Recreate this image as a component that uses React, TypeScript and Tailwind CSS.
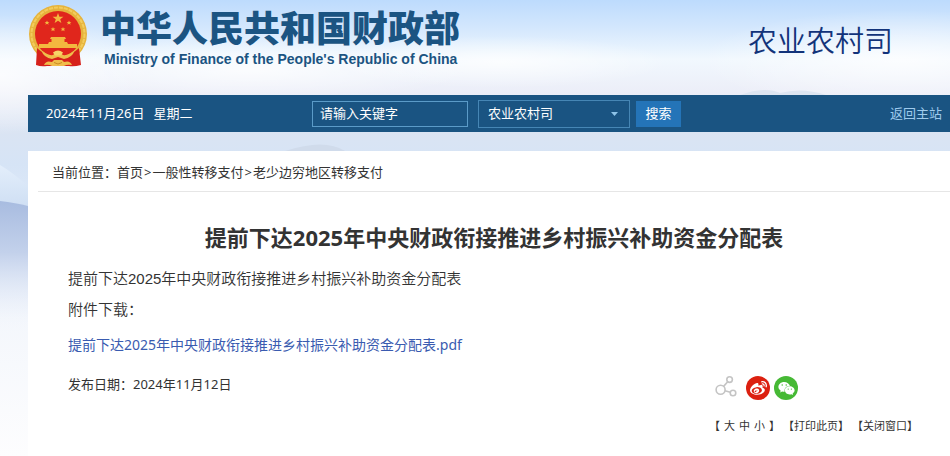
import React, { useState } from 'react';
import { FaWeibo, FaWeixin } from 'react-icons/fa';

const docTitle = '提前下达2025年中央财政衔接推进乡村振兴补助资金分配表';

const departments = ['农业农村司', '预算司', '税政司', '社会保障司'];

const crumbs = ['首页', '一般性转移支付', '老少边穷地区转移支付'];

// 页面背景：天空渐变 + 远山
function Scenery() {
  return (
    <svg
      className="absolute inset-0 -z-10 w-full h-[456px]"
      viewBox="0 0 950 456"
      preserveAspectRatio="none"
      aria-hidden="true"
    >
      <defs>
        <linearGradient id="sky" x1="0" y1="0" x2="0" y2="1">
          <stop offset="0" stopColor="#bddbfd" />
          <stop offset="0.06" stopColor="#d3e7fd" />
          <stop offset="0.13" stopColor="#f1f8fe" />
          <stop offset="0.2" stopColor="#eceef8" />
          <stop offset="0.29" stopColor="#dae4f3" />
          <stop offset="0.36" stopColor="#d6e4f6" />
          <stop offset="0.55" stopColor="#e6eefa" />
          <stop offset="0.7" stopColor="#f4f7fc" />
          <stop offset="1" stopColor="#fdfdfe" />
        </linearGradient>
        <radialGradient id="cloud">
          <stop offset="0" stopColor="#ffffff" stopOpacity="0.75" />
          <stop offset="1" stopColor="#ffffff" stopOpacity="0" />
        </radialGradient>
        <linearGradient id="hill" x1="0" y1="0" x2="0" y2="1">
          <stop offset="0" stopColor="#a8bce0" />
          <stop offset="0.4" stopColor="#c3d1eb" />
          <stop offset="1" stopColor="#f3f6fc" stopOpacity="0" />
        </linearGradient>
        <linearGradient id="ridge" x1="0" y1="0" x2="0" y2="1">
          <stop offset="0" stopColor="#e3eefb" />
          <stop offset="1" stopColor="#cbdcf2" />
        </linearGradient>
      </defs>
      <rect width="950" height="456" fill="url(#sky)" />
      <ellipse cx="0" cy="75" rx="150" ry="60" fill="url(#cloud)" />
      <ellipse cx="250" cy="70" rx="220" ry="32" fill="url(#cloud)" />
      <ellipse cx="500" cy="62" rx="170" ry="26" fill="url(#cloud)" />
      <ellipse cx="900" cy="60" rx="200" ry="50" fill="url(#cloud)" />
      <path d="M740 95 Q765 86 780 93 Q802 87 826 95Z" fill="#dde5f1" />
      <path d="M285 151 Q325 138 345 151Z" fill="#d0dbeb" />
      <path d="M0 165 Q12 172 28 186 V215 H0Z" fill="url(#ridge)" />
      <path d="M0 201 Q16 203 28 206 V330 H0Z" fill="url(#hill)" />
    </svg>
  );
}

function Emblem() {
  return (
    <svg width="60" height="64" viewBox="0 0 60 64" role="img" aria-label="国徽">
      <circle cx="30" cy="29" r="29" fill="#e6b33c" />
      <circle cx="30" cy="29" r="26.5" fill="none" stroke="#f3cc5c" strokeWidth="2" strokeDasharray="4 1" />
      <circle cx="30" cy="29" r="23" fill="#e0261c" />
      <g transform="translate(1 0)">
        <path d="M8 43 Q14 49 23 50 H35 Q44 49 50 43 L52 60 Q45 62 40 61 H18 Q12 62 7 60Z" fill="#d6211b" />
        <g fill="#f3b83f">
          <path d="M29 8l1.4 3.8h4l-3.2 2.4 1.2 3.9-3.4-2.3-3.4 2.3 1.2-3.9-3.2-2.4h4z" />
          <path d="M18 15.500l.7 1.6h1.7l-1.3 1 .5 1.7-1.6-1-1.6 1 .5-1.7-1.3-1h1.7z" />
          <path d="M40 15.500l.7 1.6h1.7l-1.3 1 .5 1.7-1.6-1-1.6 1 .5-1.7-1.3-1h1.7z" />
          <path d="M24 22l.7 1.6h1.7l-1.3 1 .5 1.7-1.6-1-1.6 1 .5-1.7-1.3-1h1.7z" />
          <path d="M34 22l.7 1.6h1.7l-1.3 1 .5 1.7-1.6-1-1.6 1 .5-1.7-1.3-1h1.7z" />
          <path d="M22 32h14l1 2h-1.500v3h2.500l1 2H19l1-2h2.500v-3H21z" />
          <path d="M10 39h38v4H10z" />
        </g>
        <path d="M12 45q7 6 12 5l5-4 5 4q5 1 12-5-3 8-11 9l-6-2-6 2q-8-1-11-9z" fill="#f0bd4b" />
        <path d="M24 47.500q5-4 10 0l-2 3h-6z" fill="#f7d468" />
        <path d="M15 60q2-5 8-3l2-2h8l2 2q6-2 8 3-5-1-8 1H23q-3-2-8-1z" fill="#f0bd4b" />
        <path d="M25 57.500q4 3 8 0" fill="none" stroke="#c98a22" strokeWidth="1" />
      </g>
    </svg>
  );
}

function ShareIcon() {
  return (
    <svg width="22" height="24" viewBox="0 0 22 24" fill="none" stroke="#c4c4c4" strokeWidth="1.6" aria-hidden="true">
      <circle cx="5.6" cy="13.8" r="4.5" />
      <circle cx="14.6" cy="3.6" r="2.8" />
      <circle cx="18" cy="17" r="2.8" />
      <path d="M8.6 10.4 12.7 5.8M10 14.8l5.300 1.400" />
    </svg>
  );
}

export default function App() {
  const [keyword, setKeyword] = useState('');
  const [department, setDepartment] = useState(departments[0]);

  return (
    <div className="relative isolate min-h-screen flex flex-col overflow-x-hidden text-[13px] text-[#333] font-['Noto_Sans','Noto_Sans_CJK_SC',sans-serif]">
      <Scenery />

      <header className="h-[95px] flex items-start pl-7 pr-[57px] pt-[5px]">
        <Emblem />
        <div className="ml-3 text-[#1b5482]">
          <div className="text-[36px] leading-[43px] font-black font-['Noto_Sans_CJK_SC',sans-serif] whitespace-nowrap">中华人民共和国财政部</div>
          <div className="pl-1 text-[14px] leading-[22px] font-bold font-['Liberation_Sans',sans-serif] whitespace-nowrap">
            Ministry of Finance of the People's Republic of China
          </div>
        </div>
        <div className="ml-auto pt-[14px] text-[29px] leading-[40px] font-[350] font-['Noto_Sans_CJK_SC',sans-serif] text-[#12337a] whitespace-nowrap">农业农村司</div>
      </header>

      {/* 搜索栏 */}
      <div className="ml-7 h-[37px] pl-[18px] pr-2 flex items-center bg-[#1a5482] text-white">
        <div className="w-[266px] shrink-0 flex gap-[9px]">
          <span>2024年11月26日</span>
          <span>星期二</span>
        </div>
        <form className="flex items-center" onSubmit={e => e.preventDefault()}>
          <input
            type="text"
            aria-label="关键字"
            placeholder="请输入关键字"
            value={keyword}
            onChange={e => setKeyword(e.target.value)}
            className="w-[156px] h-[26px] px-[7px] pb-[2px] border border-[#5b9bc8] bg-transparent outline-none placeholder:text-white"
          />
          <div className="relative ml-[10px]">
            <select
              aria-label="司局"
              value={department}
              onChange={e => setDepartment(e.target.value)}
              className="block w-[152px] h-7 px-[9px] appearance-none border border-[#4686b5] bg-transparent text-white outline-none"
            >
              {departments.map(d => (
                <option key={d} value={d} className="text-black">{d}</option>
              ))}
            </select>
            <svg className="absolute right-3 top-3 pointer-events-none" width="7" height="4" viewBox="0 0 7 4" aria-hidden="true">
              <path d="M0 0h7L3.5 4z" fill="#8ec3e8" />
            </svg>
          </div>
          <button type="submit" className="ml-[6px] w-[45px] h-[26px] bg-[#2474b8] hover:bg-[#2d82ca]">搜索</button>
        </form>
        <a href="#" className="ml-auto text-[#9fcbed] whitespace-nowrap">返回主站</a>
      </div>

      <main className="ml-7 mt-[19px] pl-[10px] pb-5 grow bg-white">
        <nav aria-label="当前位置" className="h-[41px] px-[14px] flex items-center pt-1 border-b border-[#e6e6e6]">
          <span>当前位置：</span>
          {crumbs.map((c, index) => (
            <React.Fragment key={c}>
              {index > 0 && <span className="px-px">&gt;</span>}
              <a href="#">{c}</a>
            </React.Fragment>
          ))}
        </nav>

        <h1 className="pt-7 text-center text-[22px] leading-[34px] font-bold">{docTitle}</h1>

        <div className="pl-[30px] pt-[10px]">
          <div className="text-[15px] leading-[30px] font-[350]">
            <p className="font-['Liberation_Sans_Narrow','Liberation_Sans','Noto_Sans_CJK_SC',sans-serif]">{docTitle}</p>
            <p>附件下载：</p>
          </div>
          <p className="mt-[6px] text-[14px] leading-[30px]">
            <a href="#" className="text-[#3a5bb0]">{docTitle}.pdf</a>
          </p>

          <div className="mt-3 pr-8 flex items-start justify-between">
            <p className="leading-6">发布日期：2024年11月12日</p>
            <div className="pt-1">
              <div className="pl-[6px] flex items-center">
                <ShareIcon />
                <button type="button" aria-label="分享到微博" className="ml-[9px] size-6 rounded-full bg-[#dc2010] text-white flex items-center justify-center">
                  <FaWeibo size={17} />
                </button>
                <button type="button" aria-label="分享到微信" className="ml-1 size-6 rounded-full bg-[#46b935] text-white flex items-center justify-center">
                  <FaWeixin size={17} />
                </button>
              </div>
              <div className="mt-4 flex gap-[3px] text-[11px] leading-5 whitespace-nowrap">
                <div className="flex gap-1">
                  <span>【</span>
                  <button type="button">大</button>
                  <button type="button">中</button>
                  <button type="button">小</button>
                  <span>】</span>
                </div>
                <button type="button">【打印此页】</button>
                <button type="button">【关闭窗口】</button>
              </div>
            </div>
          </div>
        </div>
      </main>
    </div>
  );
}
